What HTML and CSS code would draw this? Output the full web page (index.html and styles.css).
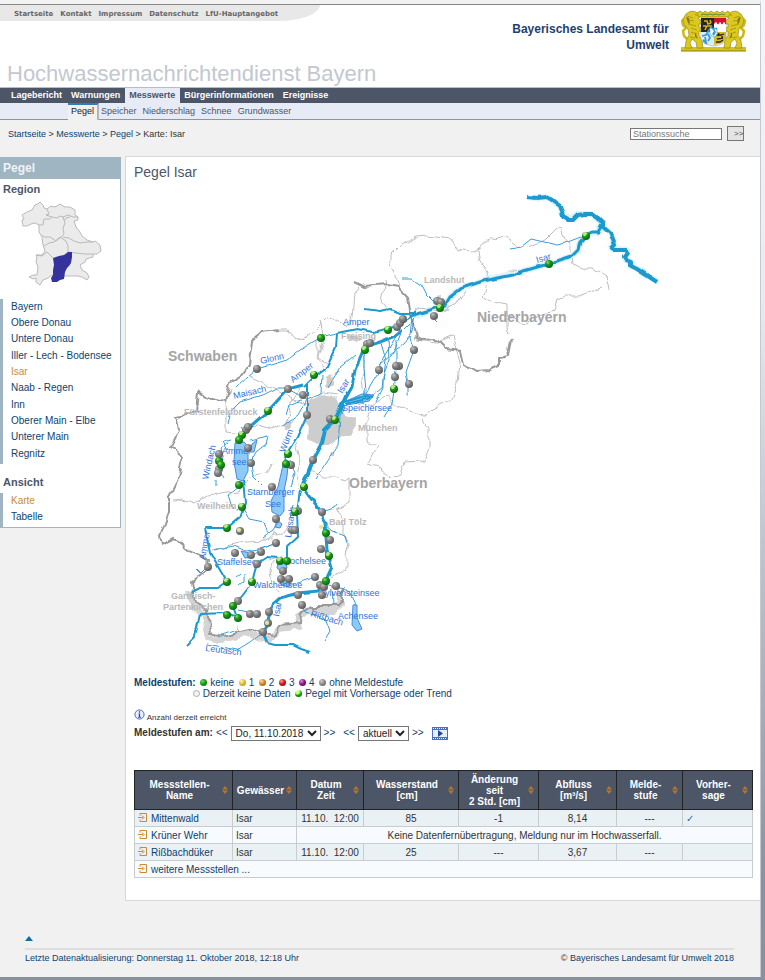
FILE: index.html
```
<!DOCTYPE html>
<html lang="de">
<head>
	<meta charset="utf-8">
	<title>Pegel Isar - Hochwassernachrichtendienst Bayern</title>
	<link rel="stylesheet" href="styles.css">
</head>
<body>
<div class="page">

	<div class="header">
		<div class="metanav">
			<a href="#">Startseite</a>
			<a href="#">Kontakt</a>
			<a href="#">Impressum</a>
			<a href="#">Datenschutz</a>
			<a href="#">LfU-Hauptangebot</a>
		</div>
		<div class="brand">
			<p class="office">Bayerisches Landesamt für<br>Umwelt</p>
			<svg class="crest" viewBox="0 0 66 42" aria-hidden="true">
				<defs>
					<g id="lion" stroke="#8c7a10" stroke-width=".6">
						<path fill="none" stroke="#cdb91c" stroke-width="2.5" d="M6 29l-3-3-1-5 3-3-3-3-1-4 2-2"/>
						<path fill="#dcc91e" d="M5 4l3-2 3-1 4 1 3 2 1 3-2 1 2 2 3 1v3l-4 0 0 3 4 2 0 3-4-1 0 5 3 4 1 8h-6l-1-6-4-3-2 4 2 5h-7l1-7 3-6-1-6-4-5-1-5z"/>
						<path fill="none" d="M6 6l6 2M6 10l7 1M7 14l8 2M10 18l6 2M10 22l6 2M9 27l5 1"/>
						<path fill="#8c7a10" stroke="none" d="M14 4l2 1-1 1zM5 7l2 6 2 1-1-6zM14 22l3 7-3-2z"/>
					</g>
				</defs>
				<rect x="0" y="37" width="65" height="4" fill="#d5c31c"/>
				<path d="M0 41h65" stroke="#8c7a10"/>
				<use href="#lion"/>
				<use href="#lion" transform="matrix(-1 0 0 1 65 0)"/>
				<path fill="#dcc91e" stroke="#8c7a10" stroke-width=".6" d="M18 7l-2-4 3-2 3 2 2-2 3 2 3-2 3 2 3-2 3 2 2-2 3 2 3-2 2 3-2 3z"/>
				<path d="M20 5l3-1 3 1 3-1 3 1 3-1 3 1 3-1 3 1" fill="none" stroke="#5f8a3c"/>
				<path fill="#fff" stroke="#777" stroke-width=".5" d="M20 8h25v20q0 6-12 8-13-2-13-8z"/>
				<path fill="#29251a" d="M20 8h13v14H20z"/>
				<path fill="none" stroke="#d8b51c" stroke-width="1.6" d="M23 11l3 0 1 3 3-1M24 20l2-4 4 0 0 4M29 10l1 3M22 16l3 0"/>
				<path fill="#d5122d" d="M33 8h12v7l-2-3-2 3-2-3-2 3-2-3-2 3z"/>
				<path fill="#fff" d="M33 14l2-2 2 3 2-3 2 3 2-3 2 3v7H33z"/>
				<path fill="#d8edf8" d="M20 22h13v13q-13-2-13-8z"/>
				<path fill="none" stroke="#3b9bce" stroke-width="1.8" d="M31 16l-3 4-3 5-4 1M29 21l3 3M27 24l2 4-2 3M24 27l1 5M22 30l4 4M31 19l2 2"/>
				<path fill="#ceba20" d="M33 22h12v6q0 5-12 7z"/>
				<path fill="none" stroke="#29251a" stroke-width="1.3" d="M35 25l5 0 3-1M36 29l6-1M35 32l4 0 3-2M38 23l-1 3M41 26l0 3"/>
				<path fill="#fff" stroke="#3b9bce" stroke-width=".6" d="M29 18h7v6q-1 3-3 3-4-1-4-4z"/>
				<path fill="#3b9bce" d="M30 18l3 3-2 3 2 2 2-4-2-4 3 2v-2z"/>
			</svg>
		</div>
		<h1>Hochwassernachrichtendienst Bayern</h1>
	</div>

	<div class="mainnav">
		<a href="#">Lagebericht</a>
		<a href="#">Warnungen</a>
		<a href="#" class="active">Messwerte</a>
		<a href="#">Bürgerinformationen</a>
		<a href="#">Ereignisse</a>
	</div>
	<div class="subnav">
		<a href="#" class="active">Pegel</a>
		<a href="#">Speicher</a>
		<a href="#">Niederschlag</a>
		<a href="#">Schnee</a>
		<a href="#">Grundwasser</a>
	</div>

	<div class="pathbar">
		<p class="breadcrumb"><a href="#">Startseite</a> &gt; <a href="#">Messwerte</a> &gt; <a href="#">Pegel</a> &gt; Karte: Isar</p>
		<form class="search">
			<input type="text" placeholder="Stationssuche" aria-label="Stationssuche">
			<button type="button">&gt;&gt;</button>
		</form>
	</div>

	<div class="columns">
		<div class="sidebar">
			<h2>Pegel</h2>
			<h3>Region</h3>
			<svg class="region" viewBox="0 0 120 88" aria-hidden="true">
				<g fill="#ebebeb" stroke="#bababa" stroke-linejoin="round">
					<path d="M40 3L43 6 44 9 47 10 51 7 54 8 57 7 60 5 65 8 70 8 75 11 75 16 78 18 78 21 74 22 76 28 80 33 82 37 87 41 93 43 95 42 100 46 101 52 97 55 93 55 93 58 86 60 85 63 80 66 82 71 87 74 89 78 87 81 82 78 78 77 72 77 65 77 58 80 52 76 48 79 43 81 40 86 36 83 36 79 33 80 29 78 33 76 37 76 38 68 36 63 37 58 36 56 42 56 45 52 43 46 42 38 39 33 39 26 35 24 31 25 27 27 23 27 22 21 24 20 22 16 27 13 32 11 35 6 38 5z"/>
					<path fill="none" d="M47 10L49 15 46 16 52 18 57 19 60 17 63 18 68 16 73 18 78 18M39 26L43 26 44 20 50 20 52 18M63 18L65 24 63 29 64 35 60 39 56 42 50 38 44 38 42 36M64 22L66 19 70 18M63 38L69 39 74 42 80 44 87 43 93 43M44 47L49 44 54 43 60 38 66 42 68 47 68 53M36 56L42 57 47 53 53 59M68 53L76 54 85 55 93 55"/>
				</g>
				<path fill="#33339b" d="M53 59L59 57 64 56 68 53 72 53 72 58 71 64 69 67 67 69 65 73 64 80 60 81 57 83 52 83 51 79 53 76 53 71 54 66z"/>
			</svg>
			<ul>
				<li><a href="#">Bayern</a></li>
				<li><a href="#">Obere Donau</a></li>
				<li><a href="#">Untere Donau</a></li>
				<li><a href="#">Iller - Lech - Bodensee</a></li>
				<li><a href="#" class="active">Isar</a></li>
				<li><a href="#">Naab - Regen</a></li>
				<li><a href="#">Inn</a></li>
				<li><a href="#">Oberer Main - Elbe</a></li>
				<li><a href="#">Unterer Main</a></li>
				<li><a href="#">Regnitz</a></li>
			</ul>
			<h3>Ansicht</h3>
			<ul>
				<li><a href="#" class="active">Karte</a></li>
				<li><a href="#">Tabelle</a></li>
			</ul>
		</div>

		<div class="content">
			<h2>Pegel Isar</h2>

			<svg class="map" viewBox="134 186 618 480" role="img" aria-label="Karte Isar">
				<defs>
					<filter id="rough" x="-5%" y="-5%" width="110%" height="110%">
						<feTurbulence type="fractalNoise" baseFrequency=".1" numOctaves="1" seed="4"/>
						<feDisplacementMap in="SourceGraphic" scale="9" xChannelSelector="R" yChannelSelector="G"/>
						<feGaussianBlur stdDeviation=".35"/>
					</filter>
					<filter id="wavy" x="-5%" y="-5%" width="110%" height="110%">
						<feTurbulence type="fractalNoise" baseFrequency=".1" numOctaves="1" seed="8"/>
						<feDisplacementMap in="SourceGraphic" scale="4" xChannelSelector="R" yChannelSelector="G"/>
						<feGaussianBlur stdDeviation=".4"/>
					</filter>
					<radialGradient id="g-green" cx=".35" cy=".3" r=".7"><stop offset="0" stop-color="#8fe06a"/><stop offset=".4" stop-color="#1f9a1f"/><stop offset="1" stop-color="#0a6a0a"/></radialGradient>
					<radialGradient id="g-gray" cx=".35" cy=".3" r=".7"><stop offset="0" stop-color="#c4c4c4"/><stop offset=".45" stop-color="#858585"/><stop offset="1" stop-color="#5c5c5c"/></radialGradient>
					<circle id="k" r="4" fill="url(#g-green)"/>
					<circle id="o" r="4" fill="url(#g-gray)"/>
					<g id="v"><circle r="4" fill="url(#g-green)"/><path d="M-3-1Q-1 1 0-1T2-2Q1-4-1-4T-3-1" fill="#bfe88a"/></g>
				</defs>

				<!-- Landkreise -->
				<g class="district" filter="url(#rough)">
					<path d="M278 330l10 0 9 10 10-3 9-8 11-11 7-1 7 6 4 3 6-8 2-23 7-8"/>
					<path d="M399 286l-8-23 0-8 10-10 16-8 11-1 24 3 6 11 13 2 11-4"/>
					<path d="M478 250l14-13 16 1 13 9 10-1 14-6 10-10 5-4 4 10 3 7 5 10 1 10 9 5 12 0 12 8 3 14"/>
					<path d="M478 250l2 11 9 11-1 4-3 14-2 6 8 6 16 3 0 8 13 10 8 1 4-6 22-6 3-12 10-4 13 0 12-5 10-3"/>
					<path d="M507 310l0 18 2 8"/>
					<path d="M385 281l-4 20 4 8M416 330l-2 10M466 289l-11 17-7 1-10 4-20-3-2 9"/>
					<path d="M416 340l22 3 14-6 8 25-2 22-7 17-18 8-8 7-24-8-14-12-14 8-6-1"/>
					<path d="M372 412l-6 12 0 18 11 4-9 18 12 4 10 9 10-1 4-14 20-1 5-13 0-20-8-10"/>
					<path d="M232 388l-6 10 0 34 16 2 15-9 15 4 15-7 4-20 10-15"/>
					<path d="M248 377l17 8 12 5 14 8 16 6 16-12 13 2"/>
					<path d="M296 442l4 17-4 15 3 14M311 470l12 6 12 0 10 5 4-3 0 25-12 7 6 10 0 10 6 13-3 13 0 13-14 9"/>
					<path d="M173 500l11-1 11 4 12-7 20-4 12-1 10-14 18-3 5-10M213 550l21-6 13-2 20-1 8-7 8-1 5-8"/>
					<path d="M276 560l-6 10 2 16 7 8M284 555l-15 5M318 340l0 18 10 7M320 320l4 20-7 18 10 12M365 350l-2 28 2 20-6 8"/>
				</g>
				<g class="town" filter="url(#rough)">
					<path d="M308 400l16-6 12 3 6 14 12 8 3 9-6 5-9 3-7 4-8 5-12 1-7-7 1-15-5-5z"/>
					<path d="M327 377l3-2 4 8-5 4-3-3zM436 296l5-1 2 7 7 3-1 5-10 1-2-7zM507 270l10 1 1 4-8 3-5-3zM350 336l12 2-4 6-10-3zM286 420l8 1-3 8-6-1zM329 452l5 0-1 5-5 0z"/>
				</g>
				<!-- Regierungsbezirke -->
				<g filter="url(#rough)">
					<path class="border-halo" d="M189 592l3 15 13 6 3 24 12 3 30-7 8 4 12 2 6-10 22-2 1-10 8-6 27 0 6-8 0-12"/>
					<path class="border" d="M278 330l-15 2-10 8-3 23-10 14-10 6-5 19-14-3-12-8-2 22-21 4 3 13-9 17 13 10-6 24-8 16 0 14-9 25 2 9 11-6 17 13 19 8-2 9-16 12 4 22 13 6 3 24 12 3 30-7 8 4 12 2 6-10 22-2 1-10 8-6 27 0 6-8 0-12"/>
					<path class="border" d="M355 282l10 5 20-2 13 2 10 11 3 18 5 22 6 2 14-1 10 10 15 2 3 13 12 7 14-1 9-4 0-9 9-2 3-15"/>
				</g>

				<!-- Seen -->
				<g class="lake">
					<path d="M235 443l9-1 4 4 0 25-5 10-6-2-3-17zM283 465l5 0-1 11-3 15 0 20-4 5-8-4-1-11 7-14zM277 520l5 4-2 4-5-1zM278 563l8 0 1 5-5 4-5-4zM241 551l9 2 4 4-9 1zM353 605l4 0 0 13 5 11-5 2-5-6zM344 402l18-8 12 1-5 6-22 4zM252 444l5-4-3 12-4 0zM280 578l11 2-2 7-8-2z"/>
				</g>

				<!-- Fluesse -->
				<g class="river" filter="url(#wavy)">
					<g class="halo">
						<path d="M527 197l10 1 10-1 13 9 3 10 9 3 6-5 14 0 11 9 0 4 7 6 5 12-4 3 16 2-2 10 7 2 0 4 10 5 16 11"/>
						<path d="M602 225l-4 7-12 3-6 7-2 8-6 6-24 8-28 8-37 9-21 7-12 9-5 8-15 5-15 7"/>
					</g>
					<path class="w4" d="M527 197l10 1M537 198l10-1M547 197l5 3 8 6 2 5 1 6 5 3 5 0 5-5 6-1 8 0 6 4 5 5 0 4 7 6 3 6 2 6-3 3 3 2 10 0 2 3-3 4 2 3 5 2 0 4 6 3 20 13"/>
					<path class="w3" d="M602 225l-4 7-6 0-6 3-6 7-2 8-6 6-24 8-28 8-7 3-30 6-21 7-12 9-5 8-15 5-20 6"/>
					<path class="w3" d="M402 331l-7 5-15 6-15 5-3 6-7 17-3 17-9 16"/>
					<path class="w4" d="M348 392l-5 11-8 17-10 10-3 13-9 17-5 13-5 11"/>
					<path class="w3" d="M303 484l0 4 5 7 10 12 7 16 2 27 5 17-7 15-7 9-20 2-18 5-8 7-4 15 0 5-5 7 4 11"/>
					<path class="w2" d="M267 643l8 2 18 0 8 4 9 3"/>
					<path class="w2" d="M415 313l-15 0-10-4-10 2-15-2M412 316l-10 7-15 6-14 3-16-3-20 4-1 14-9 20-13 10-10 10"/>
					<path class="w3" d="M303 385l-15 4-20 22-15 13-10 8-3 11"/>
					<path class="w2" d="M243 480l2 23-5 14-13 11-22 0 5 25 17 29M227 582l-9 6-18 0-8 4M238 600l14-18 5-19 10-6 11 1M287 560l0-13 11-10-1-25 3-22M238 600l-5 7 4 10-10-4-27 1-5 23-8 8"/>
					<path class="w1" d="M400 330l-17 28-4 13-8 13-6 12M388 338l1 22-6 17 0 11-7 14M412 316l-2 20-6 8-14 10M410 324l-9 9-8 20-13 12M415 317l-5 21 4 12-8 22 2 12 0 12M396 340l0 28-2 23-2 13-8 13M380 340l6 20-4 28-20 16M364 350l0 20 2 20-5 14"/>
					<path class="w1" d="M345 405l-5 11-2 30-9 13-13 20M355 355l-15 12-12 21M336 333l-15 4-21 13-13 10-30 9-9 8-11 10M288 388l-11 0-14 7-23 7-8 8-4 13"/>
					<path class="w2" d="M307 385l0 30-10 22-10 16-4 10"/>
					<path class="w1" d="M322 375l-1 18-14 6M288 390l18 10-8 15-14 11M301 400l-12 5-3 10M510 249l11-2 10-8 26 6 8-2 21-8M402 279l9 0 12 8 4 8 7 7M430 314l8 8"/>
					<path class="w1" d="M245 432l-4-5M219 475l5-15-3-12 7-5M216 480l0 5M221 473l3 6M228 450l-5-8 8-2M250 440l18-4-2 8-10 8-7 13M251 465l2 12 8 8M240 485l-12 10 4 12 6 3M242 507l7 12 15 3 4 12M263 537l10-7 5-8"/>
					<path class="w1" d="M213 550l21-4 12 5 18-3 12-5M254 555l7-6 13-5M207 567l-6 6-4-4M236 577l4-3M239 585l5-4 0-7M238 618l-1 12-19 7M263 632l-13 10-13 8-15-3-15-3M260 613l-5 1-17-4M302 605l2 8 22 7 4 11-6 10M320 582l12 4 1 18M335 586l15 6 5 13M322 512l12-4 3-4M325 525l7 6 13 5 3 11M315 577l-20 7-12 0M290 460l5 12-4 15M293 505l-3 12"/>
					<path class="w2" d="M344 402l22-6 8 1M346 404l24-6"/>
				</g>

				<g class="place big">
					<text x="168" y="361">Schwaben</text>
					<text x="477" y="322">Niederbayern</text>
					<text x="349" y="488">Oberbayern</text>
				</g>
				<g class="place">
					<text x="424" y="283">Landshut</text>
					<text x="341" y="339">Freising</text>
					<text x="184" y="415">Fürstenfeldbruck</text>
					<text x="358" y="431">München</text>
					<text x="197" y="509">Weilheim</text>
					<text x="329" y="525">Bad Tölz</text>
					<text x="171" y="599">Garmisch-</text>
					<text x="163" y="610">Partenkirchen</text>
				</g>
				<g class="water">
					<text x="343" y="325">Amper</text>
					<text transform="translate(537 263) rotate(-16)">Isar</text>
					<text transform="translate(261 364) rotate(-13)">Glonn</text>
					<text transform="translate(293 383) rotate(-38)">Amper</text>
					<text transform="translate(234 399) rotate(-13)">Maisach</text>
					<text transform="translate(342 394) rotate(-58)">Isar</text>
					<text x="342" y="411">Speichersee</text>
					<text transform="translate(285 453) rotate(-70)">Würm</text>
					<text x="222" y="454">Ammer</text>
					<text x="232" y="465">see</text>
					<text transform="translate(208 480) rotate(-77)">Windach</text>
					<text x="247" y="495">Starnberger</text>
					<text x="265" y="507">See</text>
					<text transform="translate(291 538) rotate(-82)">Loisach</text>
					<text transform="translate(205 560) rotate(-80)">Ammer</text>
					<text x="217" y="565">Staffelsee</text>
					<text x="284" y="564">Kochelsee</text>
					<text x="253" y="588">Walchensee</text>
					<text x="319" y="596">Sylvensteinsee</text>
					<text x="338" y="619">Achensee</text>
					<text transform="translate(279 617) rotate(-80)">Isar</text>
					<text transform="translate(310 616) rotate(17)">Rißbach</text>
					<text transform="translate(205 651) rotate(7)">Leutasch</text>
				</g>

				<!-- Messstellen -->
				<g>
					<use href="#o" x="257" y="369"/><use href="#o" x="288" y="389"/><use href="#o" x="303" y="395"/><use href="#o" x="307" y="415"/>
					<use href="#o" x="330" y="419"/><use href="#o" x="313" y="460"/><use href="#o" x="246" y="430"/><use href="#o" x="248" y="427"/>
					<use href="#o" x="248" y="448"/><use href="#o" x="251" y="463"/><use href="#o" x="219" y="454"/><use href="#o" x="219" y="469"/>
					<use href="#o" x="218" y="473"/><use href="#o" x="291" y="465"/><use href="#o" x="272" y="487"/><use href="#o" x="276" y="519"/>
					<use href="#o" x="240" y="531"/><use href="#o" x="276" y="543"/><use href="#o" x="235" y="553"/><use href="#o" x="251" y="555"/>
					<use href="#o" x="261" y="552"/><use href="#o" x="257" y="564"/><use href="#o" x="208" y="567"/><use href="#o" x="283" y="571"/>
					<use href="#o" x="281" y="579"/><use href="#o" x="289" y="579"/><use href="#o" x="238" y="601"/><use href="#o" x="250" y="614"/>
					<use href="#o" x="257" y="614"/><use href="#o" x="269" y="612"/><use href="#o" x="263" y="632"/><use href="#o" x="298" y="595"/>
					<use href="#o" x="302" y="605"/><use href="#o" x="315" y="577"/><use href="#o" x="320" y="585"/><use href="#o" x="324" y="587"/>
					<use href="#o" x="322" y="595"/><use href="#o" x="336" y="586"/><use href="#o" x="322" y="512"/><use href="#o" x="330" y="540"/>
					<use href="#o" x="321" y="549"/><use href="#o" x="298" y="511"/><use href="#o" x="292" y="530"/><use href="#o" x="295" y="530"/>
					<use href="#o" x="379" y="370"/><use href="#o" x="399" y="366"/><use href="#o" x="396" y="366"/><use href="#o" x="395" y="377"/>
					<use href="#o" x="409" y="384"/><use href="#o" x="414" y="350"/><use href="#o" x="367" y="344"/><use href="#o" x="370" y="343"/>
					<use href="#o" x="397" y="327"/><use href="#o" x="400" y="323"/><use href="#o" x="403" y="319"/><use href="#o" x="434" y="316"/>
					<use href="#o" x="437" y="301"/><use href="#o" x="441" y="302"/><use href="#o" x="268" y="623"/>
					<use href="#k" x="321" y="338"/><use href="#v" x="314" y="375"/><use href="#v" x="268" y="411"/><use href="#v" x="335" y="420"/>
					<use href="#v" x="242" y="435"/><use href="#k" x="239" y="440"/><use href="#k" x="219" y="461"/><use href="#k" x="221" y="465"/>
					<use href="#v" x="288" y="454"/><use href="#k" x="286" y="464"/><use href="#k" x="239" y="485"/><use href="#v" x="242" y="507"/>
					<use href="#v" x="227" y="528"/><use href="#v" x="304" y="487"/><use href="#v" x="295" y="512"/><use href="#k" x="326" y="533"/>
					<use href="#v" x="329" y="556"/><use href="#v" x="280" y="561"/><use href="#k" x="287" y="561"/><use href="#v" x="227" y="582"/>
					<use href="#v" x="252" y="582"/><use href="#k" x="326" y="581"/><use href="#k" x="233" y="606"/><use href="#k" x="227" y="615"/>
					<use href="#k" x="238" y="618"/><use href="#v" x="365" y="350"/><use href="#v" x="388" y="330"/><use href="#v" x="394" y="389"/>
					<use href="#v" x="440" y="308"/><use href="#k" x="549" y="264"/><use href="#v" x="586" y="236"/>
					<circle cx="239" cy="530" r="2" fill="#e8e39a"/><circle cx="267" cy="623" r="2" fill="#e8e39a"/><circle cx="321" cy="527" r="2" fill="#e8e39a"/>
				</g>
			</svg>

			<div class="legend">
				<p><b>Meldestufen:</b> <i class="dot green"></i> keine <i class="dot yellow"></i> 1 <i class="dot orange"></i> 2 <i class="dot red"></i> 3 <i class="dot violet"></i> 4 <i class="dot gray"></i> ohne Meldestufe</p>
				<p class="second"><i class="dot none"></i> Derzeit keine Daten <i class="dot trend"></i> Pegel mit Vorhersage oder Trend</p>
			</div>

			<p class="info">
				<svg viewBox="0 0 12 12" aria-hidden="true"><circle cx="6" cy="6" r="5" fill="#e9effc" stroke="#3c62b8"/><path d="M6 2.5v1.5M5 5.5h1v3.500M4.500 9h3" stroke="#2449a8" stroke-width="1.300" fill="none"/></svg>
				Anzahl derzeit erreicht
			</p>

			<form class="timebar">
				<b>Meldestufen am:</b>
				<a href="#">&lt;&lt;</a>
				<select aria-label="Datum"><option>Do, 11.10.2018</option></select>
				<a href="#">&gt;&gt;</a>
				<a href="#" class="hour">&lt;&lt;</a>
				<select aria-label="Uhrzeit"><option>aktuell</option></select>
				<a href="#">&gt;&gt;</a>
				<button type="button" aria-label="Film abspielen">
					<svg viewBox="0 0 16 13" aria-hidden="true"><rect width="16" height="13" fill="#4a70c4"/><path d="M1 1.500h14M1 11.500h14" stroke="#fff" stroke-dasharray="1 1"/><rect x="1" y="3" width="14" height="7" fill="#e6eefc"/><path d="M6 3l5 3.500-5 3.500z" fill="#1c4a9a"/></svg>
				</button>
			</form>

			<svg class="sprite" aria-hidden="true">
				<symbol id="sort" viewBox="0 0 6 8"><path d="M3 0l3 3.500H0zM3 8l3-3.500H0z" fill="#b8742a"/></symbol>
				<symbol id="goto" viewBox="0 0 9 9"><path d="M2 2.500v-2h6.500v8H2v-2M0 4.500h5M4 2.500l2 2-2 2" fill="none" stroke="#c98a35"/></symbol>
			</svg>
			<table class="stations">
				<colgroup><col class="name"><col class="river-col"><col class="date"><col class="level"><col class="change"><col class="flow"><col class="stage"><col class="forecast"></colgroup>
				<thead>
					<tr>
						<th><div><span>Messstellen-<br>Name</span><svg><use href="#sort"/></svg></div></th>
						<th><div><span>Gewässer</span><svg><use href="#sort"/></svg></div></th>
						<th><div><span>Datum<br>Zeit</span><svg><use href="#sort"/></svg></div></th>
						<th><div><span>Wasserstand<br>[cm]</span><svg><use href="#sort"/></svg></div></th>
						<th><div><span>Änderung<br>seit<br>2 Std. [cm]</span><svg><use href="#sort"/></svg></div></th>
						<th><div><span>Abfluss<br>[m³/s]</span><svg><use href="#sort"/></svg></div></th>
						<th><div><span>Melde-<br>stufe</span><svg><use href="#sort"/></svg></div></th>
						<th><div><span>Vorher-<br>sage</span><svg><use href="#sort"/></svg></div></th>
					</tr>
				</thead>
				<tbody>
					<tr>
						<td><a href="#"><svg><use href="#goto"/></svg>Mittenwald</a></td>
						<td>Isar</td>
						<td class="center">11.10. &nbsp;12:00</td>
						<td class="center">85</td>
						<td class="center">-1</td>
						<td class="center">8,14</td>
						<td class="center">---</td>
						<td class="tick">✓</td>
					</tr>
					<tr class="even">
						<td><a href="#"><svg><use href="#goto"/></svg>Krüner Wehr</a></td>
						<td>Isar</td>
						<td colspan="6" class="center">Keine Datenfernübertragung, Meldung nur im Hochwasserfall.</td>
					</tr>
					<tr>
						<td><a href="#"><svg><use href="#goto"/></svg>Rißbachdüker</a></td>
						<td>Isar</td>
						<td class="center">11.10. &nbsp;12:00</td>
						<td class="center">25</td>
						<td class="center">---</td>
						<td class="center">3,67</td>
						<td class="center">---</td>
						<td></td>
					</tr>
					<tr class="even">
						<td colspan="8"><a href="#"><svg><use href="#goto"/></svg>weitere Messstellen ...</a></td>
					</tr>
				</tbody>
			</table>
		</div>
	</div>

	<div class="footer">
		<a href="#" class="totop" aria-label="nach oben"></a>
		<div class="imprint">
			<span>Letzte Datenaktualisierung: Donnerstag 11. Oktober 2018, 12:18 Uhr</span>
			<span>© Bayerisches Landesamt für Umwelt 2018</span>
		</div>
	</div>

</div>
</body>
</html>
```
FILE: styles.css
```
* {box-sizing: border-box;}
body {
	margin: 0;
	padding: 0 4px 3px 0;
	font: 10px/16px "Liberation Sans", Arial, sans-serif;
	color: #333;
	background: linear-gradient(#f4f5f8, #e9ebf0 30%, #8793a3 90%, #8791a0);
}
h1, h2, h3, p, ul {margin: 0; padding: 0; font-weight: normal;}
ul {list-style: none;}
a {color: #0d3f6f; text-decoration: none;}
input, select, button {font-family: inherit;}

.page {
	border-top: 4px solid #f2f2f2;
	border-right: 1px solid #c4c8d0;
	background: #f1f1f1;
}

/* Kopf */
.header {
	display: grid;
	grid-template-columns: 1fr auto;
	height: 84px;
	border-top: 1px solid #858585;
	border-bottom: 1px solid #b8bcc4;
	background: #fff;
}
.metanav {
	display: flex;
	gap: 7px;
	justify-self: start;
	height: 16px;
	padding: 0 42px 0 14px;
	border-radius: 0 0 42px 0 / 0 0 16px 0;
	background: #e8e8e8;
	font: bold 7px/18px "DejaVu Sans", Verdana, sans-serif;
}
.metanav a {color: #666;}
.brand {
	display: flex;
	gap: 12px;
	padding: 5px 13px 0 0;
}
.office {
	padding-top: 11px;
	font-size: 12px;
	font-weight: bold;
	text-align: right;
	color: #1e3f72;
}
.crest {width: 66px; height: 42px;}
.header h1 {
	grid-column: 1 / 3;
	align-self: end;
	padding-left: 7px;
	font-size: 22px;
	line-height: 26px;
	color: #c3c8d0;
}

/* Navigation */
.mainnav {
	display: flex;
	padding-left: 7px;
	background: #4d5667;
	font-size: 9px;
	font-weight: bold;
	line-height: 15px;
}
.mainnav a {padding: 0 5px 0 4px; color: #fff;}
.mainnav a.active {background: #e6ebf6; color: #4d5667;}
.subnav {
	display: flex;
	gap: 6px;
	height: 17px;
	padding-left: 68px;
	border-bottom: 1px solid #8b95a6;
	background: #e6ebf6;
	font-size: 9px;
}
.subnav a {color: #4d5667;}
.subnav a.active {
	height: 17px;
	margin-right: -4px;
	padding: 0 3px;
	border-top: 2px solid #2f7fb5;
	border-right: 2px solid #b5b5b5;
	background: #f1f1f1;
	color: #222;
	line-height: 13px;
}
.pathbar {
	display: flex;
	justify-content: space-between;
	align-items: center;
	height: 36px;
	padding: 0 16px 9px 8px;
}
.breadcrumb {font-size: 9px;}
.search {display: flex; align-items: center; gap: 5px;}
.search input {
	width: 92px;
	height: 12px;
	padding: 0 2px;
	border: 1px solid #777;
	font-size: 9px;
}
.search input::placeholder {color: #777;}
.search button {
	width: 17px;
	height: 15px;
	padding: 0 0 0 6px;
	overflow: hidden;
	border: 1px solid #777;
	background: #e4e4e4;
	color: #444;
	font-size: 8px;
}

/* linke Spalte */
.columns {display: flex; align-items: flex-start; gap: 4px;}
.sidebar {
	flex: 0 0 121px;
	margin-top: 1px;
	border: 1px solid #9fb5c1;
	border-left: 0;
	background: #fff;
}
.sidebar h2 {
	padding-left: 3px;
	background: #9fb5c1;
	color: #eef3f5;
	font-size: 12px;
	font-weight: bold;
	line-height: 21px;
}
.sidebar h3 {
	padding: 2px 3px;
	color: #4d5667;
	font-size: 11px;
	font-weight: bold;
}
.region {display: block; width: 100%; margin-bottom: 12px;}
.sidebar ul {
	padding: 0 0 2px 8px;
	border-left: 3px solid #9fb5c1;
}
.sidebar li:nth-child(3n) {padding-bottom: 1px;}
.sidebar ul + h3 {padding-top: 10px; padding-bottom: 3px;}
.sidebar .active {color: #c98a35;}

/* Inhalt */
.content {
	flex: 1;
	min-width: 0;
	padding: 5px 8px 22px;
	border: 1px solid #d8d8d8;
	border-right: 0;
	background: #fff;
}
.content h2 {color: #4d5667; font-size: 14px; line-height: 20px;}
.map {display: block; width: 100%; margin-top: 4px;}
.district {fill: none; stroke: #bdbdbd; stroke-width: 1;}
.border {fill: none; stroke: #999; stroke-width: 2;}
.border-halo {fill: none; stroke: #d4d4d4; stroke-width: 6;}
.town {fill: #cdcdcd;}
.lake {fill: #8ccbf6; stroke: #4a86e0; stroke-width: 1;}
.river {fill: none; stroke: #1c9ad0; stroke-linejoin: round;}
.river .halo {stroke: #def3fb; stroke-width: 6;}
.w1 {stroke: #3a9cd8; stroke-width: 1;}
.w2 {stroke-width: 2;}
.w3 {stroke-width: 3;}
.w4 {stroke-width: 4;}
.place {fill: #b9b9b9; font-size: 9px; font-weight: bold;}
.place.big {fill: #a5a5a5; font-size: 14px;}
.water {fill: #2f74de; font-size: 9px;}

.legend {margin-top: 11px; color: #0d3f6f; line-height: 11px;}
.legend .second {padding-left: 57px;}
.dot {
	display: inline-block;
	width: 7px;
	height: 7px;
	margin-left: 2px;
	border-radius: 50%;
}
.green {background: radial-gradient(circle at 35% 30%, #7c7, #191 50%, #060);}
.yellow {background: radial-gradient(circle at 35% 30%, #ffa, #d8b830 50%, #a80);}
.orange {background: radial-gradient(circle at 35% 30%, #fd9, #d08020 50%, #950);}
.red {background: radial-gradient(circle at 35% 30%, #f99, #c01818 50%, #800);}
.violet {background: radial-gradient(circle at 35% 30%, #d8d, #818 50%, #505);}
.gray {background: radial-gradient(circle at 35% 30%, #ccc, #888 50%, #555);}
.none {border: 1px solid #aaa; background: #f4f4f4;}
.trend {background: radial-gradient(circle at 35% 25%, #cf8 25%, #191 55%, #060);}

.info {margin-top: 10px; font-size: 8px; line-height: 13px;}
.info svg {width: 11px; height: 11px;}
.timebar {
	display: flex;
	align-items: center;
	gap: 3px;
	margin-top: 1px;
}
.timebar .hour {margin-left: 5px;}
.timebar select {
	height: 15px;
	padding: 0;
	border: 1px solid #777;
	background: #fff;
	color: #222;
	font-size: 10px;
}
.timebar button {margin-left: 5px; padding: 0; border: 0; background: none;}
.timebar button svg {display: block; width: 16px; height: 13px;}
.sprite {display: none;}

.stations {
	width: 100%;
	margin-top: 29px;
	border-collapse: collapse;
	table-layout: fixed;
}
.name {width: 98px;}
.river-col {width: 64px;}
.date {width: 67px;}
.level {width: 95px;}
.change {width: 80px;}
.flow {width: 78px;}
.stage {width: 66px;}
.forecast {width: 70px;}
.stations th {
	height: 39px;
	padding: 0 4px 0 2px;
	border: 1px solid #222;
	background: #4d5667;
	color: #fff;
	line-height: 11px;
}
.stations th div {display: flex; align-items: center;}
.stations th span {flex: 1;}
.stations th svg {width: 6px; height: 8px;}
.stations td {
	height: 17px;
	padding: 0 3px;
	border: 1px solid #c8cccf;
	background: #eaf1f4;
	line-height: 15px;
}
.stations .even td {background: #f7fbfd;}
.stations .center {text-align: center;}
.stations .tick {color: #2f6cb5; font-family: "DejaVu Sans", sans-serif;}
.stations td a {font-weight: normal;}
.stations td svg {width: 9px; height: 9px; margin-right: 4px;}

/* Fuss */
.footer {padding: 35px 26px 11px 25px; color: #0d3f6f; font-size: 9px;}
.totop {
	display: block;
	width: 0;
	border: 4px solid transparent;
	border-top: 0;
	border-bottom: 5px solid #1d6a9c;
}
.imprint {
	display: flex;
	justify-content: space-between;
	margin-top: 7px;
	border-top: 2px solid #dedede;
}
```
